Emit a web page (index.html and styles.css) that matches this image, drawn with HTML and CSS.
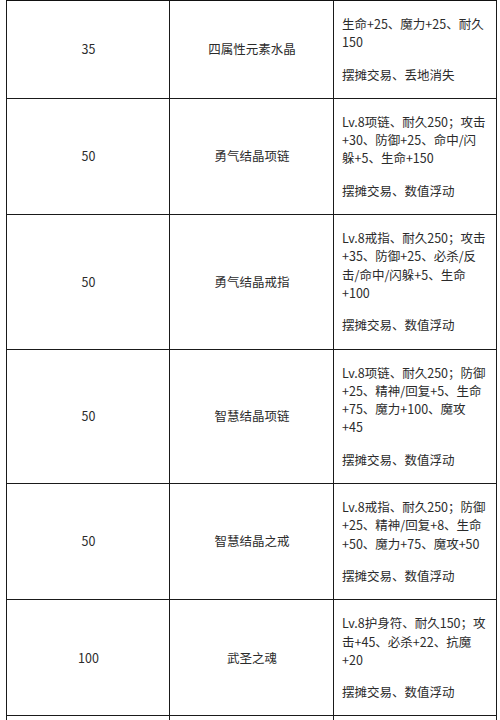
FILE: index.html
```html
<!DOCTYPE html>
<html lang="zh-CN">
<head>
<meta charset="utf-8">
<link rel="stylesheet" href="styles.css">
</head>
<body>
<div class="wrap">
<table class="items">
<colgroup><col class="c1"><col class="c2"><col class="c3"></colgroup>
<tbody>
<tr>
<td class="num">35</td>
<td class="name">四属性元素水晶</td>
<td class="desc"><p>生命+25、魔力+25、耐久<br>150</p><p>摆摊交易、丢地消失</p></td>
</tr>
<tr>
<td class="num">50</td>
<td class="name">勇气结晶项链</td>
<td class="desc"><p>Lv.8项链、耐久250；攻击<br>+30、防御+25、命中/闪<br>躲+5、生命+150</p><p>摆摊交易、数值浮动</p></td>
</tr>
<tr>
<td class="num">50</td>
<td class="name">勇气结晶戒指</td>
<td class="desc"><p>Lv.8戒指、耐久250；攻击<br>+35、防御+25、必杀/反<br>击/命中/闪躲+5、生命<br>+100</p><p>摆摊交易、数值浮动</p></td>
</tr>
<tr>
<td class="num">50</td>
<td class="name">智慧结晶项链</td>
<td class="desc"><p>Lv.8项链、耐久250；防御<br>+25、精神/回复+5、生命<br>+75、魔力+100、魔攻<br>+45</p><p>摆摊交易、数值浮动</p></td>
</tr>
<tr>
<td class="num">50</td>
<td class="name">智慧结晶之戒</td>
<td class="desc"><p>Lv.8戒指、耐久250；防御<br>+25、精神/回复+8、生命<br>+50、魔力+75、魔攻+50</p><p>摆摊交易、数值浮动</p></td>
</tr>
<tr>
<td class="num">100</td>
<td class="name">武圣之魂</td>
<td class="desc"><p>Lv.8护身符、耐久150；攻<br>击+45、必杀+22、抗魔<br>+20</p><p>摆摊交易、数值浮动</p></td>
</tr>
<tr>
<td class="num">&nbsp;</td>
<td class="name">&nbsp;</td>
<td class="desc"><p>&nbsp;</p><p>&nbsp;</p></td>
</tr>
</tbody>
</table>
</div>
</body>
</html>
```
FILE: styles.css
```css
html, body {
  margin: 0;
  padding: 0;
  background: #fff;
}
body {
  font-family: "Noto Sans CJK SC", "Noto Sans", sans-serif;
  font-size: 12.5px;
  line-height: 18.3px;
  color: #2b2b2b;
}
.wrap {
  padding-left: 6px;
  overflow: hidden;
  height: 720px;
}
.items {
  border-collapse: collapse;
  table-layout: fixed;
  width: 490px;
  margin-top: -2px;
  border-top: 3px solid #111;
}
.c1 { width: 163px; }
.c2 { width: 164px; }
.c3 { width: 163px; }
.items td {
  border: 1px solid #1a1a1a;
  padding: 0 7px 0 8px;
  vertical-align: middle;
}
.num, .name {
  text-align: center;
}
.desc p {
  margin: 14px 0;
  white-space: nowrap;
}
```
